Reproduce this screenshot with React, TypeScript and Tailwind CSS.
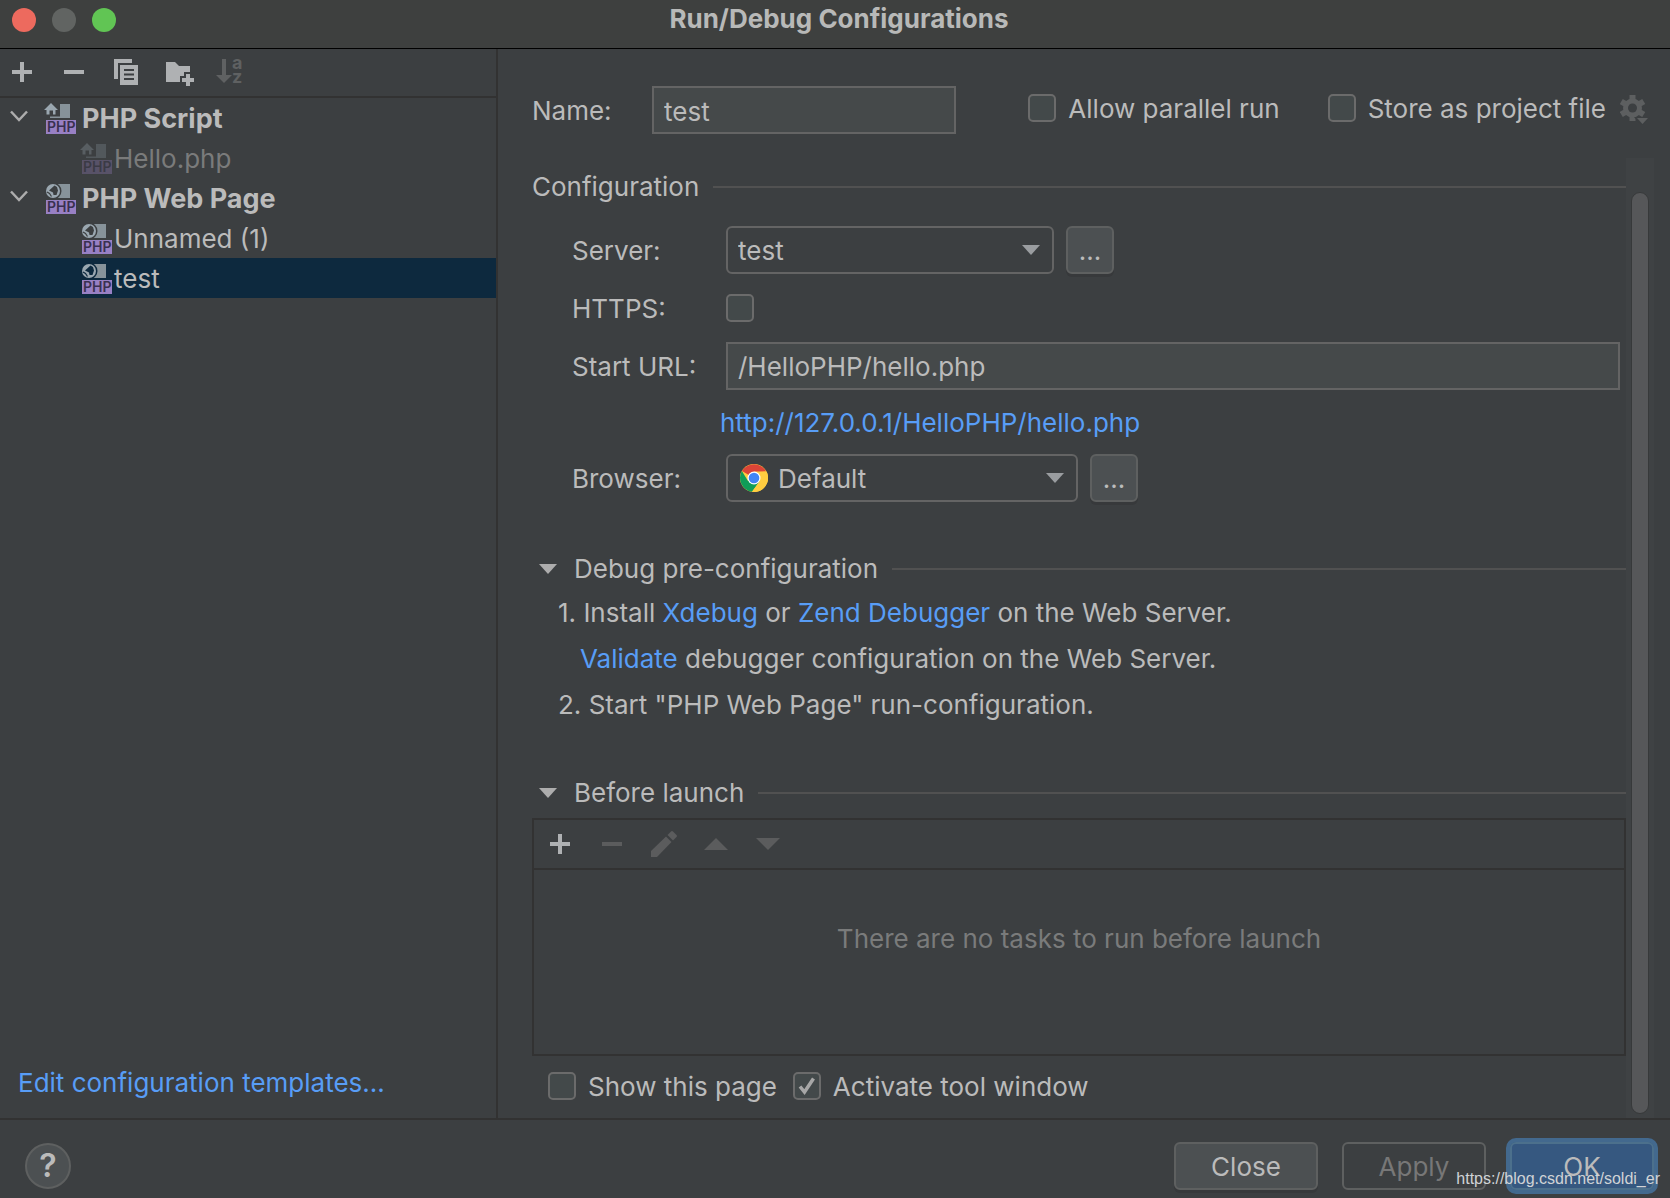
import { useId, type ReactNode } from "react";

function PhpIcon({ kind, dim, dark }: { kind: "script" | "web"; dim?: boolean; dark?: boolean }) {
  const clip = useId();
  const bg = dark ? "#0d293e" : "#3c3f41";
  return (
    <svg width="32" height="34" viewBox="0 0 32 34" className={dim ? "shrink-0 opacity-30" : "shrink-0"} aria-hidden="true">
      {kind === "script" ? (
        <g>
          <path d="M7 2 14 9H11.500V13.500H9V9.500H5.500V13.500H2.500V9H0Z" fill="#9aa7b0" />
          <path d="M16 3H26V17H6V15.500H16Z" fill="#87939a" />
        </g>
      ) : (
        <g>
          <path d="M14 3H26V17H14Z" fill="#87939a" />
          <circle cx="9" cy="10" r="8.500" fill={bg} />
          <circle cx="9" cy="10" r="7" fill="#9aa7b0" />
          <path d="M5 9.500 10.500 4.500 13 6 14 9.500 12.500 14 9.500 14 9 11.500Z" fill={bg} />
          <path d="M3 11 5.500 12.500 7.500 15.500" fill="none" stroke={bg} strokeWidth="1.200" />
        </g>
      )}
      <rect x="2" y="19" width="30" height="14" fill="#9880c4" />
      <clipPath id={clip}>
        <rect x="2" y="19" width="30" height="14" />
      </clipPath>
      <text x="3" y="31" fontSize="14" fontWeight="600" fontFamily="Inter, sans-serif" fill="#3a3050" clipPath={`url(#${clip})`}>
        PHP
      </text>
    </svg>
  );
}

function Chevron() {
  return (
    <svg width="18" height="12" viewBox="0 0 18 12" className="shrink-0" aria-hidden="true">
      <path d="M1 1.500 9 10 17 1.500" fill="none" stroke="#adadad" strokeWidth="2.500" />
    </svg>
  );
}

function Plus() {
  return (
    <svg width="20" height="20" viewBox="0 0 20 20" aria-hidden="true">
      <path d="M8 0H12V8H20V12H12V20H8V12H0V8H8Z" fill="#afb1b3" />
    </svg>
  );
}

function Minus({ color }: { color: string }) {
  return (
    <svg width="20" height="20" viewBox="0 0 20 20" aria-hidden="true">
      <path d="M0 8H20V12H0Z" fill={color} />
    </svg>
  );
}

function CopyIcon() {
  return (
    <svg width="24" height="26" viewBox="0 0 24 26" aria-hidden="true">
      <path d="M0 0H18V4H4V20H0Z" fill="#afb1b3" />
      <path d="M6 6H24V26H6Z" fill="#afb1b3" />
      <path d="M10 11H20M10 15.500H20M10 20H20" stroke="#3c3f41" strokeWidth="2" />
    </svg>
  );
}

function FolderAddIcon() {
  return (
    <svg width="28" height="24" viewBox="0 0 28 24" aria-hidden="true">
      <path d="M0 0H9L13 4H24V10H18V14H14V20H0Z" fill="#afb1b3" />
      <path d="M20 12H24V16H28V20H24V24H20V20H16V16H20Z" fill="#afb1b3" />
    </svg>
  );
}

function SortIcon() {
  return (
    <svg width="28" height="26" viewBox="0 0 28 26" className="overflow-visible" aria-hidden="true">
      <path d="M6 0H10V16H16L8 24 0 16H6Z" fill="#5f6162" />
      <g fill="#5f6162" fontFamily="Inter, sans-serif" fontWeight="700" fontSize="18">
        <text x="16" y="10">a</text>
        <text x="16" y="24">z</text>
      </g>
    </svg>
  );
}

function Pencil() {
  return (
    <svg width="26" height="26" viewBox="0 0 26 26" aria-hidden="true">
      <path d="M0 20 15 5.500 20.500 11 6 26H0Z" fill="#5b5c5d" />
      <path d="M16.500 4 20 0.500Q21 -.4 22 .5L25.500 4Q26.400 5 25.500 6L22 9.500Z" fill="#5b5c5d" />
    </svg>
  );
}

function Triangle({ up, color, w, h }: { up?: boolean; color: string; w: number; h: number }) {
  return (
    <svg width={w} height={h} viewBox="0 0 18 10" preserveAspectRatio="none" className="shrink-0" aria-hidden="true">
      <path d={up ? "M0 10 9 0 18 10Z" : "M0 0H18L9 10Z"} fill={color} />
    </svg>
  );
}

function GearIcon() {
  return (
    <svg width="30" height="30" viewBox="0 0 30 30" aria-hidden="true">
      <g fill="#5d5f60">
        {[0, 60, 120].map((a) => (
          <rect key={a} x="9.500" y="0" width="6" height="26" transform={`rotate(${a} 12.500 13)`} />
        ))}
        <circle cx="12.500" cy="13" r="9.500" />
      </g>
      <circle cx="12.500" cy="13" r="4.500" fill="#3c3f41" />
      <path d="M14 22H30L22 31Z" fill="#3c3f41" />
      <path d="M17 23H28L22.500 29Z" fill="#5d5f60" />
    </svg>
  );
}

function ChromeIcon() {
  return (
    <svg width="28" height="28" viewBox="0 0 28 28" className="pointer-events-none" aria-hidden="true">
      <circle cx="14" cy="14" r="14" fill="#ffcd40" />
      <path d="M14 14 1.880 7A14 14 0 0 1 26.120 7.500L20 8Z" fill="#db4437" />
      <path d="M1.880 7A14 14 0 0 0 12 27.860L19.500 17.500 14 14 8 17Z" fill="#0f9d58" />
      <path d="M14 7.500H26.400A14 14 0 0 1 12 27.860L19.500 17.500Z" fill="#ffcd40" />
      <circle cx="14" cy="14" r="6.500" fill="#fff" />
      <circle cx="14" cy="14" r="5.300" fill="#4285f4" />
    </svg>
  );
}

function Check({ label, checked, id }: { label?: string; checked?: boolean; id: string }) {
  return (
    <span className="flex items-center gap-3">
      <span className="grid size-7 shrink-0">
        <input
          id={id}
          type="checkbox"
          defaultChecked={checked}
          className="peer col-start-1 row-start-1 size-7 appearance-none rounded-[5px] border-2 border-[#6b6b6b] bg-[#43494a]"
        />
        <svg viewBox="0 0 28 28" className="pointer-events-none invisible col-start-1 row-start-1 size-7 peer-checked:visible" aria-hidden="true">
          <path d="M7 14.500 11.500 20 20.500 6.500" fill="none" stroke="#a7a7a7" strokeWidth="3.500" />
        </svg>
      </span>
      {label && (
        <label htmlFor={id} className="whitespace-nowrap pt-0.5">
          {label}
        </label>
      )}
    </span>
  );
}

function TreeRow({ icon, label, depth, className = "" }: { icon: ReactNode; label: string; depth: number; className?: string }) {
  return (
    <li className={`flex h-10 items-center ${className}`}>
      {depth === 0 ? (
        <button aria-label={`Collapse ${label}`} className="flex h-full w-11 items-center pb-1 pl-[10px]">
          <Chevron />
        </button>
      ) : (
        <span className="w-20" />
      )}
      {icon}
      <span className={depth === 0 ? "pt-0.5 pl-[6px] text-[27px] font-bold" : "pt-0.5 pl-0.5"}>{label}</span>
    </li>
  );
}

function Heading({ label, collapsible }: { label: string; collapsible?: boolean }) {
  return (
    <div className="flex h-8 items-center">
      {collapsible && (
        <button aria-label={`Toggle ${label}`} className="flex w-[42px] items-center pl-[7px]">
          <Triangle color="#adadad" w={18} h={10} />
        </button>
      )}
      <h2 className="mr-[14px]">{label}</h2>
      <span className="h-0.5 flex-1 bg-[#515151]" />
    </div>
  );
}

function Combo({ id, value, icon, className }: { id: string; value: string; icon?: ReactNode; className: string }) {
  return (
    <span className={`relative flex items-center ${className}`}>
      {icon && <span className="absolute left-[14px]">{icon}</span>}
      <select
        id={id}
        className={`h-12 w-full appearance-none rounded-md border-2 border-[#646464] bg-[#3c3f41] pt-0.5 ${icon ? "pl-[50px]" : "pl-[10px]"}`}
      >
        <option>{value}</option>
      </select>
      <span className="pointer-events-none absolute right-[14px]">
        <Triangle color="#9a9da0" w={18} h={10} />
      </span>
    </span>
  );
}

const raised = "rounded-md border-2 border-[#5e6060] bg-[#4c5052] pt-0.5 shadow-[0_3px_0_#37393b]";

function Dots({ label }: { label: string }) {
  return (
    <button aria-label={label} className={`ml-3 size-12 ${raised}`}>
      ...
    </button>
  );
}

const link = "text-[#589df6]";
const tool = "flex w-[52px] justify-center";

export default function App() {
  return (
    <div className="flex min-h-screen flex-col bg-[#3c3f41] font-['Inter',sans-serif] text-[26px] leading-8 text-[#bbbbbb]">
      <header className="grid h-[49px] grid-cols-[1fr_auto_1fr] border-b border-black bg-[#3e403f]">
        <div className="flex gap-4 pt-2 pl-3">
          <button aria-label="Close window" className="size-6 rounded-full bg-[#ed6a5e]" />
          <button aria-label="Minimize window" className="size-6 rounded-full bg-[#616462]" />
          <button aria-label="Zoom window" className="size-6 rounded-full bg-[#61c554]" />
        </div>
        <h1 className="pt-[3px] pl-2 font-bold text-[#b8b9b8]">Run/Debug Configurations</h1>
      </header>

      <div className="flex flex-1">
        <aside className="flex w-[498px] shrink-0 flex-col border-r-2 border-[#323232]">
          <div className="flex h-[49px] items-center border-b-2 border-[#323232] pb-0.5 pl-3">
            <button aria-label="Add configuration" className="mr-8"><Plus /></button>
            <button aria-label="Remove configuration" className="mr-[30px]"><Minus color="#afb1b3" /></button>
            <button aria-label="Copy configuration" className="mr-7"><CopyIcon /></button>
            <button aria-label="Create folder" className="mr-[22px] pt-1"><FolderAddIcon /></button>
            <button aria-label="Sort configurations" disabled><SortIcon /></button>
          </div>
          <ul className="flex-1">
            <TreeRow depth={0} icon={<PhpIcon kind="script" />} label="PHP Script" />
            <TreeRow depth={1} icon={<PhpIcon kind="script" dim />} label="Hello.php" className="text-[#7a7b7b]" />
            <TreeRow depth={0} icon={<PhpIcon kind="web" />} label="PHP Web Page" />
            <TreeRow depth={1} icon={<PhpIcon kind="web" />} label="Unnamed (1)" />
            <TreeRow depth={1} icon={<PhpIcon kind="web" dark />} label="test" className="bg-[#0d293e]" />
          </ul>
          <a href="#templates" className={`mb-[19px] ml-[18px] self-start ${link}`}>Edit configuration templates...</a>
        </aside>

        <main className="flex min-w-0 flex-1 flex-col pl-[34px]">
          <div className="flex items-center pt-[37px] pr-5">
            <label htmlFor="name" className="w-[120px] pt-0.5">Name:</label>
            <input id="name" defaultValue="test" className="h-12 w-[304px] border-2 border-[#646464] bg-[#45494a] px-[10px] pt-0.5" />
            <div className="ml-auto flex items-center pb-1">
              <Check id="parallel" label="Allow parallel run" />
              <span className="w-12" />
              <Check id="store" label="Store as project file" />
              <button aria-label="Storage settings" className="ml-[14px] pt-1"><GearIcon /></button>
            </div>
          </div>

          <div className="mt-6 flex flex-1 pr-4">
            <div className="flex min-w-0 flex-1 flex-col pt-[13px]">
              <Heading label="Configuration" />
              <div className="mt-[23px] grid grid-cols-[154px_1fr] items-center gap-y-[18px] pr-[6px] pl-10">
                <label htmlFor="server" className="pt-0.5">Server:</label>
                <div className="flex">
                  <Combo id="server" value="test" className="w-[328px]" />
                  <Dots label="Browse servers" />
                </div>
                <label htmlFor="https" className="h-8 pt-px">HTTPS:</label>
                <div className="flex h-7"><Check id="https" /></div>
                <label htmlFor="url" className="pt-0.5">Start URL:</label>
                <input id="url" defaultValue="/HelloPHP/hello.php" className="h-12 w-full border-2 border-[#646464] bg-[#45494a] px-[10px]" />
              </div>
              <a href="#open" className={`mt-[17px] ml-[188px] self-start ${link}`}>http://127.0.0.1/HelloPHP/hello.php</a>
              <div className="mt-[15px] grid grid-cols-[154px_1fr] items-center pl-10">
                <label htmlFor="browser" className="pt-0.5">Browser:</label>
                <div className="flex">
                  <Combo id="browser" value="Default" icon={<ChromeIcon />} className="w-[352px]" />
                  <Dots label="Browse browsers" />
                </div>
              </div>

              <div className="mt-[51px]"><Heading label="Debug pre-configuration" collapsible /></div>
              <div className="mt-[5px] pl-[26px] leading-[46px]">
                <p>1. Install <a href="#xdebug" className={link}>Xdebug</a> or <a href="#zend" className={link}>Zend Debugger</a> on the Web Server.</p>
                <p className="pl-[22px]"><a href="#validate" className={link}>Validate</a> debugger configuration on the Web Server.</p>
                <p>2. Start "PHP Web Page" run-configuration.</p>
              </div>

              <div className="mt-[49px]"><Heading label="Before launch" collapsible /></div>
              <section className="mt-[9px] flex flex-1 flex-col border-2 border-[#323232]">
                <div className="flex h-[50px] items-center border-b-2 border-[#323232]">
                  <button aria-label="Add task" className={tool}><Plus /></button>
                  <button aria-label="Remove task" disabled className={tool}><Minus color="#5b5c5d" /></button>
                  <button aria-label="Edit task" disabled className={tool}><Pencil /></button>
                  <button aria-label="Move task up" disabled className={tool}><Triangle up color="#5b5c5d" w={24} h={12} /></button>
                  <button aria-label="Move task down" disabled className={tool}><Triangle color="#5b5c5d" w={24} h={12} /></button>
                </div>
                <p className="flex flex-1 items-center justify-center pb-[46px] text-[#7a7b7b]">There are no tasks to run before launch</p>
              </section>
              <div className="flex gap-4 pt-[13px] pb-[15px] pl-4">
                <Check id="show" label="Show this page" />
                <Check id="activate" label="Activate tool window" checked />
              </div>
            </div>
            <div className="flex w-7 bg-[#3f4244] px-[5px] pt-[34px] pb-1" role="presentation">
              <span className="w-full rounded-full border border-[#37393a] bg-[#565759]" />
            </div>
          </div>
        </main>
      </div>

      <footer className="flex h-20 items-center border-t-2 border-[#323232] pt-[14px] pr-3 pl-[25px]">
        <button aria-label="Help" className="size-[46px] rounded-full border-2 border-[#5e6060] bg-[#4c5052] text-[32px] font-semibold">?</button>
        <div className="relative ml-auto flex items-center">
          <button className={`mr-6 h-12 w-36 ${raised}`}>Close</button>
          <button disabled className="mr-5 h-12 w-36 rounded-md border-2 border-[#5e6060] pt-0.5 text-[#777777]">Apply</button>
          <button className="h-14 w-[152px] rounded-[10px] border-4 border-[#43698e] bg-[#365880]">
            <span className="flex h-full items-center justify-center rounded-md border-2 border-[#4c708c] pt-0.5">OK</span>
          </button>
          <span className="absolute -right-0.5 bottom-[3px] font-['Liberation_Sans',sans-serif] text-base leading-6 text-[#d0d3d6]">https://blog.csdn.net/soldi_er</span>
        </div>
      </footer>
    </div>
  );
}
